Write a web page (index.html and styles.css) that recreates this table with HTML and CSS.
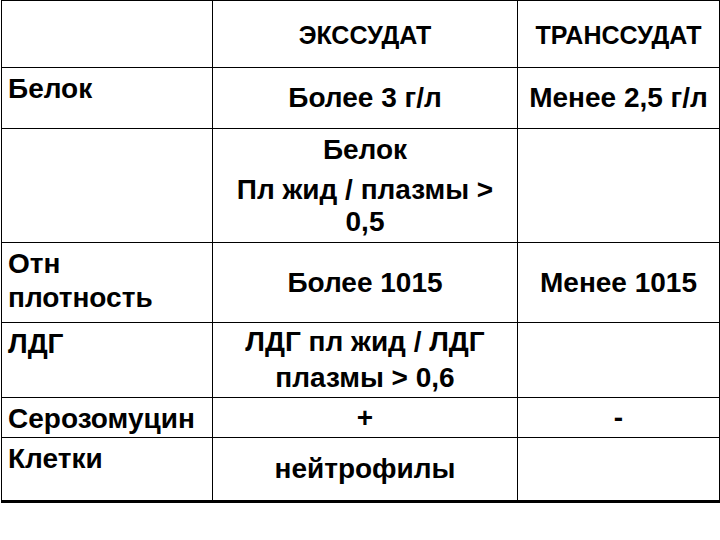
FILE: index.html
```html
<!DOCTYPE html>
<html lang="ru">
<head>
<meta charset="utf-8">
<title>Экссудат и транссудат</title>
<link rel="stylesheet" href="styles.css">
</head>
<body>
<div class="table">
  <div class="cell label"></div>
  <div class="cell mid head">ЭКССУДАТ</div>
  <div class="cell mid head">ТРАНССУДАТ</div>

  <div class="cell label">Белок</div>
  <div class="cell mid">Более 3 г/л</div>
  <div class="cell mid">Менее 2,5 г/л</div>

  <div class="cell label"></div>
  <div class="cell mid"><p class="para first">Белок</p><p class="para">Пл жид / плазмы &gt; 0,5</p></div>
  <div class="cell mid"></div>

  <div class="cell label">Отн<br>плотность</div>
  <div class="cell mid">Более 1015</div>
  <div class="cell mid">Менее 1015</div>

  <div class="cell label">ЛДГ</div>
  <div class="cell mid wide">ЛДГ пл жид / ЛДГ плазмы &gt; 0,6</div>
  <div class="cell mid"></div>

  <div class="cell label">Серозомуцин</div>
  <div class="cell mid">+</div>
  <div class="cell mid">-</div>

  <div class="cell label">Клетки</div>
  <div class="cell mid">нейтрофилы</div>
  <div class="cell mid"></div>
</div>
</body>
</html>
```

FILE: styles.css
```css
html, body {
  margin: 0;
  padding: 0;
  background: #fff;
}

body {
  font-family: "Liberation Sans", Arial, sans-serif;
  font-weight: bold;
  color: #000;
  font-size: 28px;
}

.table {
  margin-left: 1px;
  width: 719px;
  box-sizing: border-box;
  display: grid;
  grid-template-columns: 210px 304px 201px;
  grid-template-rows: 66px 60px 113px 79px 74px 39px 62px;
  gap: 1px;
  padding: 1px 1px 3px 1px;
  background: #000;
}

.cell {
  background: #fff;
  line-height: 34px;
  min-width: 0;
}

.label {
  padding: 4px 4px 0 6px;
  white-space: nowrap;
}

.mid {
  display: flex;
  flex-direction: column;
  justify-content: center;
  align-items: center;
  text-align: center;
  padding: 0 8px;
}

.head {
  font-size: 25px;
  padding-top: 2px;
}

.wide {
  line-height: 36px;
  padding: 0 22px;
}

.para {
  margin: 0;
  line-height: 32px;
}

.para.first {
  margin-bottom: 8px;
}
```
